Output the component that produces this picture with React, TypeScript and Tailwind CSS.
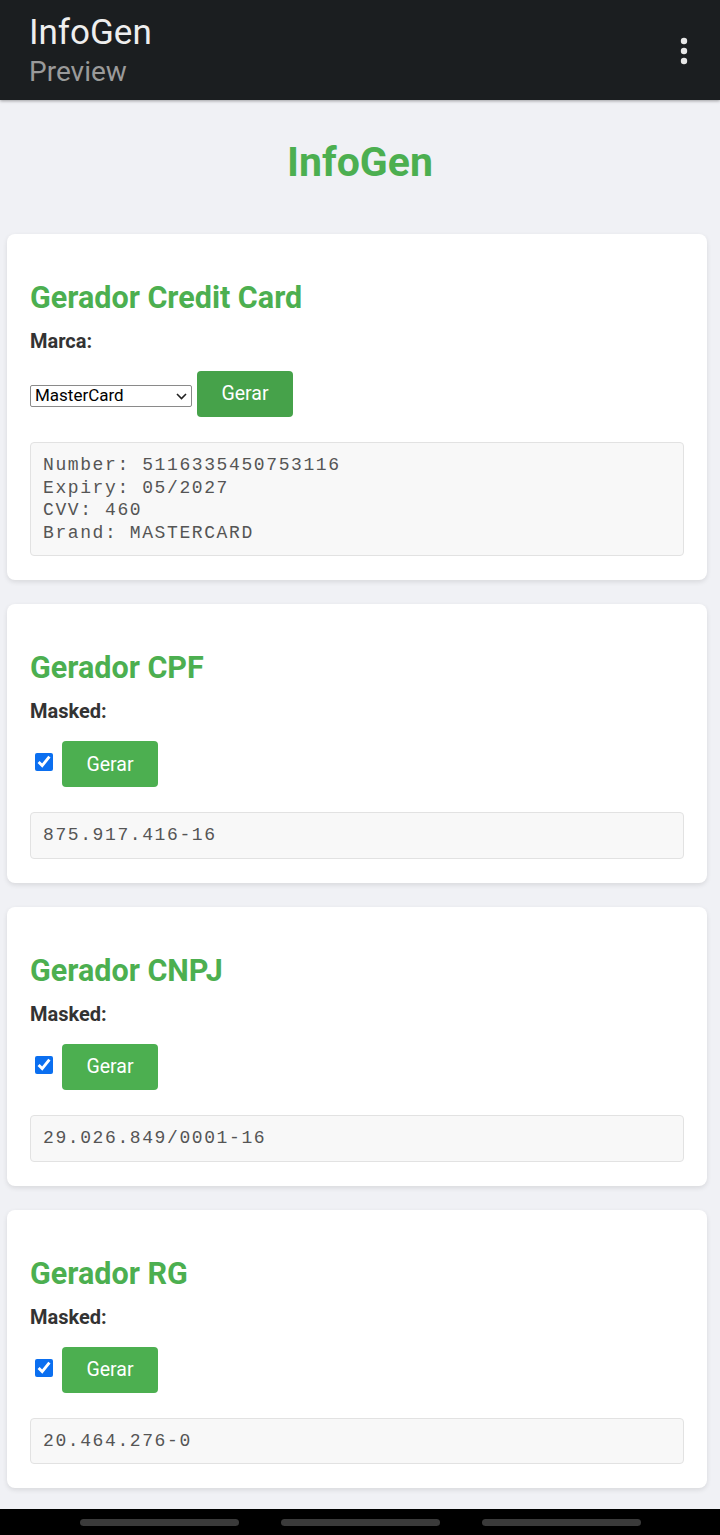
import React from "react";

const GREEN = "text-[#4caf50]";

function Card({
  title,
  children,
}: {
  title: string;
  children: React.ReactNode;
}) {
  return (
    <section className="ml-[7px] w-[700px] rounded-[8px] bg-white px-[23px] pb-[24px] pt-[24px] shadow-[0_2px_5px_rgba(0,0,0,0.1)]">
      <h2 className={`mt-[23px] text-[30.5px] font-bold leading-[34px] ${GREEN}`}>{title}</h2>
      {children}
    </section>
  );
}

function GerarButton({ dark }: { dark?: boolean }) {
  return (
    <button
      type="button"
      className={`h-[46px] w-[96px] rounded-[4px] text-[19.5px] text-white ${
        dark ? "bg-[#46a24a]" : "bg-[#4caf50]"
      }`}
    >
      Gerar
    </button>
  );
}

function Output({ lines }: { lines: string[] }) {
  return (
    <pre className="mt-[25px] rounded-[4px] border border-[#e2e2e2] bg-[#f8f8f8] px-[12px] py-[11px] font-['Liberation_Mono',monospace] text-[18px] leading-[22.6px] tracking-[1.6px] text-[#555]">
      {lines.join("\n")}
    </pre>
  );
}

function MaskedCard({ title, value }: { title: string; value: string }) {
  return (
    <Card title={title}>
      <p className="mt-[15px] text-[20px] font-bold leading-[22px] text-[#333]">Masked:</p>
      <div className="mt-[19px] flex items-center">
        <input
          type="checkbox"
          checked
          readOnly
          className="mb-[4px] ml-[5px] mr-[9px] h-[18px] w-[18px] accent-[#0b6ff0]"
        />
        <GerarButton />
      </div>
      <Output lines={[value]} />
    </Card>
  );
}

export default function App() {
  return (
    <div className="flex h-[1535px] w-[720px] flex-col bg-[#f0f1f5] font-['Roboto',sans-serif]">
      <header className="relative z-10 flex h-[100px] shrink-0 items-start justify-between bg-[#1b1e20] pl-[29px] pr-[30px] shadow-[0_1px_3px_rgba(0,0,0,0.35)]">
        <div className="flex flex-col">
          <span className="mt-[13px] text-[35px] leading-[40px] text-[#eeeeee]">InfoGen</span>
          <span className="mt-[3px] text-[28px] leading-[32px] text-[#9a9a9a]">Preview</span>
        </div>
        <svg className="mt-[36px]" width="12" height="30" viewBox="0 0 12 30">
          <circle cx="6" cy="5" r="3.2" fill="#e6e6e6" />
          <circle cx="6" cy="15" r="3.2" fill="#e6e6e6" />
          <circle cx="6" cy="25" r="3.2" fill="#e6e6e6" />
        </svg>
      </header>

      <main className="flex flex-1 flex-col">
        <h1 className={`mt-[38px] text-center text-[41px] font-bold leading-[48px] ${GREEN}`}>InfoGen</h1>

        <div className="mt-[48px] flex flex-col gap-[24px]">
          <Card title="Gerador Credit Card">
            <p className="mt-[15px] text-[20px] font-bold leading-[22px] text-[#333]">Marca:</p>
            <div className="mt-[19px] flex items-end gap-[5px]">
              <div className="mb-[10px] flex h-[22px] w-[162px] items-center justify-between rounded-[2px] border border-[#8a8a8a] bg-white pl-[4px] pr-[4px] text-[17px] text-black">
                <span>MasterCard</span>
                <svg width="11" height="7" viewBox="0 0 11 7">
                  <path d="M1 1l4.5 4.5L10 1" fill="none" stroke="#222" strokeWidth="1.6" />
                </svg>
              </div>
              <GerarButton dark />
            </div>
            <Output
              lines={[
                "Number: 5116335450753116",
                "Expiry: 05/2027",
                "CVV: 460",
                "Brand: MASTERCARD",
              ]}
            />
          </Card>

          <MaskedCard title="Gerador CPF" value="875.917.416-16" />
          <MaskedCard title="Gerador CNPJ" value="29.026.849/0001-16" />
          <MaskedCard title="Gerador RG" value="20.464.276-0" />
        </div>
      </main>

      <div className="flex h-[26px] shrink-0 items-center justify-center gap-[42px] bg-black">
        <div className="h-[7px] w-[159px] rounded-full bg-[#3a3a3a]" />
        <div className="h-[7px] w-[159px] rounded-full bg-[#3a3a3a]" />
        <div className="h-[7px] w-[159px] rounded-full bg-[#3a3a3a]" />
      </div>
    </div>
  );
}
